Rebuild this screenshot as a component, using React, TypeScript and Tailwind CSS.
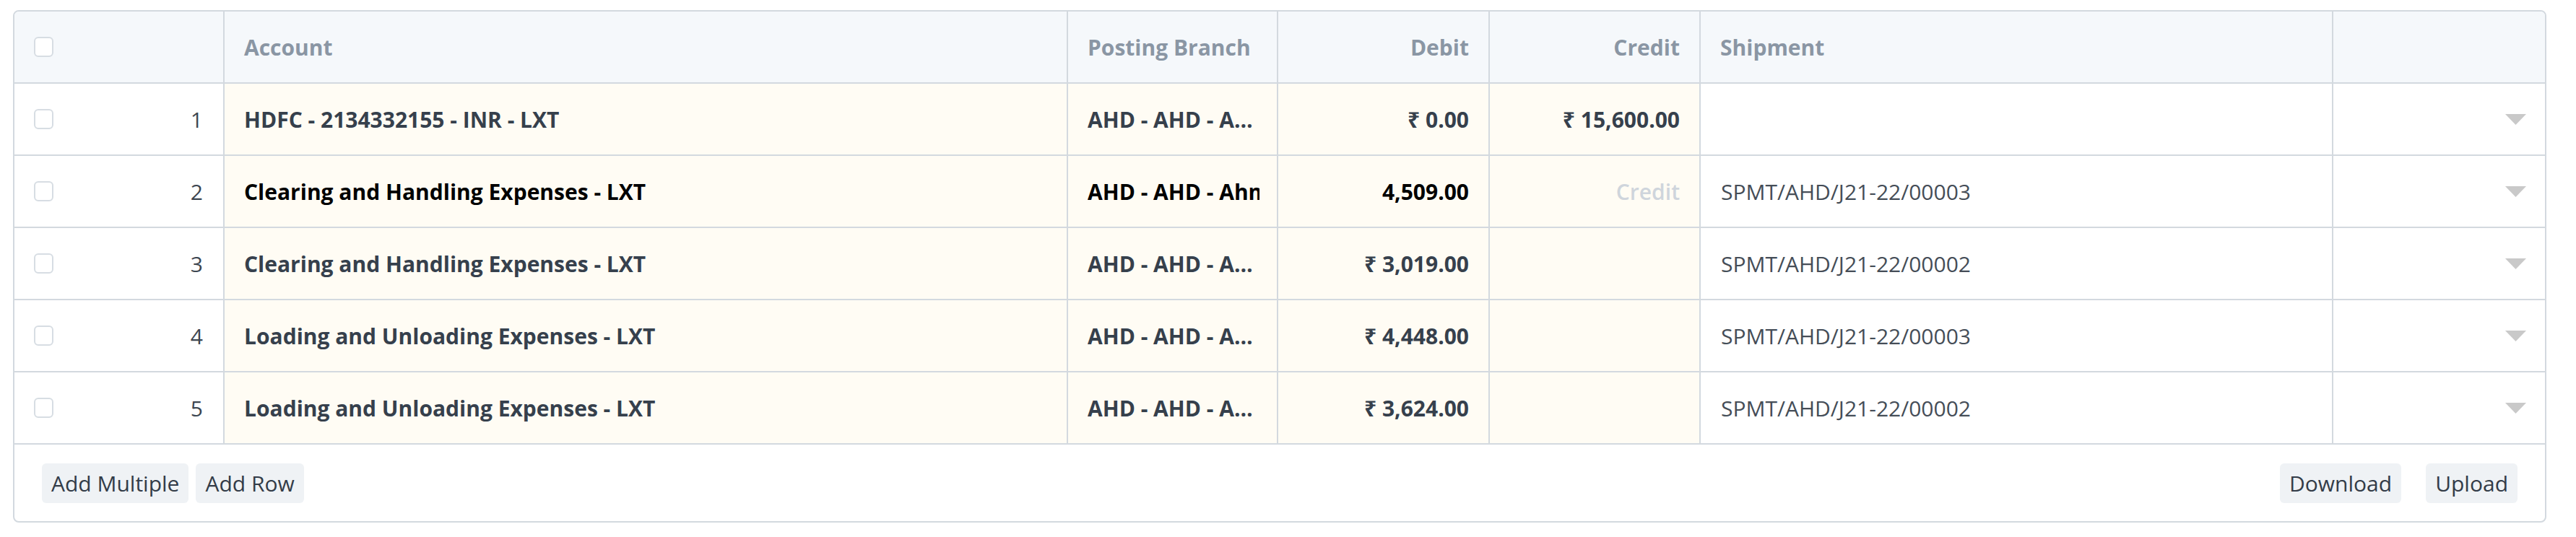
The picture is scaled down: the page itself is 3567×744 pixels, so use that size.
import React from 'react';

type Row = {
  id: number;
  account: string;
  branch: string;
  debit: string;
  credit: string;
  shipment: string;
  editing?: boolean;
};

const rows: Row[] = [
  { id: 1, account: 'HDFC - 2134332155 - INR - LXT', branch: 'AHD - AHD - Ahmedabad', debit: '₹ 0.00', credit: '₹ 15,600.00', shipment: '' },
  { id: 2, account: 'Clearing and Handling Expenses - LXT', branch: 'AHD - AHD - Ahmedabad', debit: '4,509.00', credit: '', shipment: 'SPMT/AHD/J21-22/00003', editing: true },
  { id: 3, account: 'Clearing and Handling Expenses - LXT', branch: 'AHD - AHD - Ahmedabad', debit: '₹ 3,019.00', credit: '', shipment: 'SPMT/AHD/J21-22/00002' },
  { id: 4, account: 'Loading and Unloading Expenses - LXT', branch: 'AHD - AHD - Ahmedabad', debit: '₹ 4,448.00', credit: '', shipment: 'SPMT/AHD/J21-22/00003' },
  { id: 5, account: 'Loading and Unloading Expenses - LXT', branch: 'AHD - AHD - Ahmedabad', debit: '₹ 3,624.00', credit: '', shipment: 'SPMT/AHD/J21-22/00002' },
];

const gridCols = 'grid grid-cols-[291px_1168px_291px_293px_292px_876px_1fr]';

function Checkbox() {
  return <span className="block w-[27px] h-[28px] rounded-[6px] border-2 border-[#d7dde3] bg-white" />;
}

function Caret() {
  return (
    <svg width="29" height="15" viewBox="0 0 29 15">
      <path d="M0 0 H29 L14.5 15 Z" fill="#c9c9c9" />
    </svg>
  );
}

export default function App() {
  return (
    <div className="min-h-screen bg-white pt-[14px] pl-[18px] font-['Open_Sans','Noto_Sans',sans-serif] text-[30px]">
      <div className="w-[3508px] rounded-[8px] border-2 border-[#d3d9df] overflow-hidden">
        {/* header */}
        <div className={`${gridCols} h-[100px] bg-[#f5f8fb] border-b-2 border-[#d3d9df] font-bold text-[#8a96a4]`}>
          <div className="flex items-center pl-[27px] border-r-2 border-[#d3d9df]">
            <Checkbox />
          </div>
          <div className="flex items-center px-[27px] border-r-2 border-[#d3d9df]">Account</div>
          <div className="flex items-center px-[27px] border-r-2 border-[#d3d9df]">Posting Branch</div>
          <div className="flex items-center justify-end px-[27px] border-r-2 border-[#d3d9df]">Debit</div>
          <div className="flex items-center justify-end px-[27px] border-r-2 border-[#d3d9df]">Credit</div>
          <div className="flex items-center px-[27px] border-r-2 border-[#d3d9df]">Shipment</div>
          <div />
        </div>

        {/* body rows */}
        {rows.map((row) => {
          const strong = row.editing ? 'text-black' : 'text-[#36404c]';
          return (
            <div key={row.id} className={`${gridCols} h-[100px] border-b-2 border-[#d3d9df]`}>
              <div className="flex items-center justify-between pl-[27px] pr-[28px] border-r-2 border-[#d3d9df] text-[#3d4650]">
                <Checkbox />
                <span>{row.id}</span>
              </div>
              <div className={`flex items-center px-[27px] bg-[#fffcf4] border-r-2 border-[#d3d9df] font-bold ${strong}`}>
                {row.account}
              </div>
              <div className={`flex items-center pl-[27px] pr-[24px] bg-[#fffcf4] border-r-2 border-[#d3d9df] font-bold ${strong} min-w-0`}>
                <span className={row.editing ? 'whitespace-nowrap overflow-hidden' : 'whitespace-nowrap overflow-hidden text-ellipsis'}>
                  {row.branch}
                </span>
              </div>
              <div className={`flex items-center justify-end px-[27px] bg-[#fffcf4] border-r-2 border-[#d3d9df] font-bold ${strong}`}>
                {row.debit}
              </div>
              <div className="flex items-center justify-end px-[27px] bg-[#fffcf4] border-r-2 border-[#d3d9df] font-bold text-[#36404c]">
                {row.editing ? <span className="font-semibold text-[#cfd5dc]">Credit</span> : row.credit}
              </div>
              <div className="flex items-center px-[28px] border-r-2 border-[#d3d9df] text-[#454d57]">
                {row.shipment}
              </div>
              <div className="flex items-center justify-end pr-[26px]">
                <Caret />
              </div>
            </div>
          );
        })}

        {/* footer */}
        <div className="flex items-center justify-between h-[106px] px-[38px] text-[#333c48]">
          <div className="flex gap-[10px]">
            <button className="h-[55px] px-[13px] rounded-[6px] bg-[#eff2f5]">Add Multiple</button>
            <button className="h-[55px] px-[13px] rounded-[6px] bg-[#eff2f5]">Add Row</button>
          </div>
          <div className="flex gap-[34px]">
            <button className="h-[55px] px-[13px] rounded-[6px] bg-[#eff2f5]">Download</button>
            <button className="h-[55px] px-[13px] rounded-[6px] bg-[#eff2f5]">Upload</button>
          </div>
        </div>
      </div>
    </div>
  );
}
